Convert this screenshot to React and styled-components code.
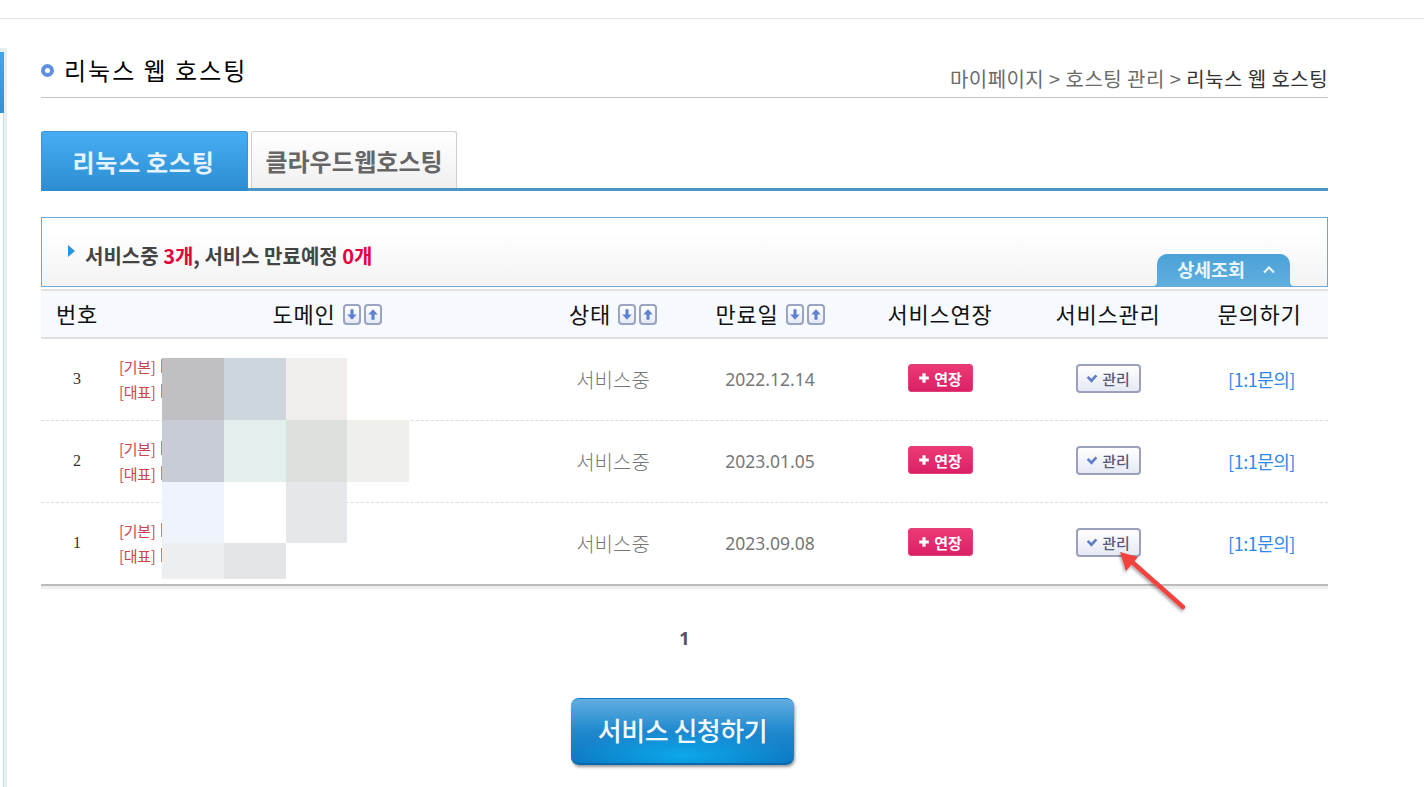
import React from 'react';
import styled, { createGlobalStyle } from 'styled-components';

const rows = [
    { no: 3, date: '2022.12.14' },
    { no: 2, date: '2023.01.05' },
    { no: 1, date: '2023.09.08' },
];

const mosaic = [
    '#c0bfc4', '#ced6dd', '#f2eeee', 'transparent',
    '#c8ccd4', '#e2efed', '#dce1dd', '#eff0eb',
    '#eff3fb', '#ffffff', '#e6e7ea', 'transparent',
    '#edeef0', '#e4e5e7', 'transparent', 'transparent',
];

const GlobalStyle = createGlobalStyle`
    html, body {
        margin: 0;
        padding: 0;
        background: #fff;
        overflow: hidden;
    }
    body {
        font-family: "Noto Sans CJK KR", "Liberation Sans", sans-serif;
    }
`;

const Page = styled.div`
    width: 1424px;
    height: 787px;
    overflow: hidden;
`;

const TopBar = styled.div`
    height: 18px;
    border-bottom: 1px solid #e4e4e4;
`;

const Body = styled.div`
    display: flex;
    padding-top: 29px;
`;

const SideEdge = styled.div`
    width: 7px;
    height: 740px;
    margin-right: 34px;
    background:
        linear-gradient(#3fa6ee, #3490d6) 0 4px / 4px 61px no-repeat,
        linear-gradient(#fff, #fff) 0 65px / 3px 100% no-repeat,
        linear-gradient(#c4def2, #c4def2) 3px 65px / 1px 100% no-repeat,
        #e9eef2;
`;

const Content = styled.div`
    position: relative;
    width: 1287px;
`;

const TitleRow = styled.div`
    height: 49px;
    display: flex;
    align-items: flex-end;
    justify-content: space-between;
    border-bottom: 1px solid #c4c4c4;
`;

const Title = styled.h1`
    display: flex;
    align-items: center;
    margin: 0 0 12px;
    font-size: 24px;
    line-height: 30px;
    font-weight: 400;
    color: #000;
    letter-spacing: 2px;
`;

const Bullet = styled.i`
    width: 5px;
    height: 5px;
    margin-right: 10px;
    border: 4px solid #6190e0;
    border-radius: 50%;
`;

const Crumbs = styled.div`
    margin-bottom: 5px;
    font-size: 20px;
    line-height: 26px;
    color: #6b6b6b;
    letter-spacing: 0.45px;
    b {
        font-weight: 400;
        color: #333;
    }
`;

const Tabs = styled.div`
    display: flex;
    align-items: flex-end;
    gap: 3px;
    height: 60px;
    margin-top: 33px;
    border-bottom: 3px solid #4a96c9;
    box-sizing: border-box;
`;

const Tab = styled.div`
    width: ${p => (p.$active ? '207px' : '206px')};
    height: ${p => (p.$active ? '60px' : '57px')};
    margin-bottom: ${p => (p.$active ? '-3px' : '0')};
    padding-right: ${p => (p.$active ? '2px' : '0')};
    display: flex;
    align-items: center;
    justify-content: center;
    box-sizing: border-box;
    border-radius: 3px 3px 0 0;
    border: 1px solid ${p => (p.$active ? '#3a94d6' : '#cfcfcf')};
    border-bottom: none;
    background: ${p => (p.$active
        ? 'linear-gradient(#46aef5, #2d8cd0)'
        : 'linear-gradient(#fff, #f0f0f0)')};
    color: ${p => (p.$active ? '#e4f3fd' : '#666')};
    font-size: 24px;
    font-weight: 700;
    letter-spacing: ${p => (p.$active ? '0.7px' : '0')};
    word-spacing: ${p => (p.$active ? '-1px' : '-5px')};
`;

const Summary = styled.div`
    position: relative;
    height: 70px;
    margin-top: 26px;
    box-sizing: border-box;
    display: flex;
    align-items: center;
    padding: 6px 0 0 26px;
    border: 1px solid #6aa8d8;
    background: linear-gradient(#fff 20%, #f3f3f4);
    font-size: 20px;
    font-weight: 700;
    color: #444;
    em {
        font-style: normal;
        color: #e6003c;
    }
    &::before {
        content: "";
        position: absolute;
        left: 26px;
        top: 27px;
        border-left: 7px solid #2b93d8;
        border-top: 6px solid transparent;
        border-bottom: 6px solid transparent;
    }
    span {
        margin-left: 17px;
    }
`;

const DetailTab = styled.div`
    position: absolute;
    right: 37px;
    bottom: 0;
    width: 133px;
    height: 32px;
    padding: 0 0 2px 6px;
    display: flex;
    align-items: center;
    justify-content: center;
    gap: 17px;
    box-sizing: border-box;
    border-radius: 10px 10px 0 0;
    background: linear-gradient(#4ba2d8, #60aedd);
    color: #e9f5fc;
    font-size: 18.5px;
    font-weight: 700;
    letter-spacing: -0.1px;
    &::before,
    &::after {
        content: "";
        position: absolute;
        bottom: 0;
        width: 4px;
        height: 4px;
    }
    &::before {
        left: -4px;
        background: radial-gradient(circle at 0 0, transparent 3.5px, #60aedd 4.5px);
    }
    &::after {
        right: -4px;
        background: radial-gradient(circle at 100% 0, transparent 3.5px, #60aedd 4.5px);
    }
`;

const columns = '72px 428px 144px 170px 170px 166px 137px';

const HeadRow = styled.div`
    display: grid;
    grid-template-columns: ${columns};
    height: 50px;
    margin-top: 2px;
    box-sizing: border-box;
    border-top: 2px solid #e2e2e2;
    border-bottom: 2px solid #e0e0e2;
    background: #f6f9fd;
`;

const HeadCell = styled.div`
    display: flex;
    align-items: center;
    justify-content: center;
    gap: 5px;
    padding-bottom: 2px;
    font-size: 22px;
    letter-spacing: 0.8px;
    color: #111;
`;

const SortGroup = styled.span`
    display: inline-flex;
    gap: 3px;
    margin-left: 2px;
    margin-top: 2px;
`;

const SortBtn = styled.span`
    width: 18px;
    height: 21px;
    display: flex;
    align-items: center;
    justify-content: center;
    box-sizing: border-box;
    border: 2px solid #9aa3c0;
    border-radius: 4px;
    background: linear-gradient(#fff, #e4e9f5);
`;

const Rows = styled.div`
    position: relative;
    border-bottom: 2px solid #bcbcbc;
    box-shadow: 0 3px 0 #eeeeee;
`;

const Row = styled.div`
    display: grid;
    grid-template-columns: ${columns};
    height: ${p => (p.$last ? '81px' : '82px')};
    box-sizing: border-box;
    border-bottom: ${p => (p.$last ? 'none' : '1px dashed #dcdcdc')};
`;

const Cell = styled.div`
    display: flex;
    align-items: center;
    justify-content: center;
    font-size: 20px;
    font-weight: 300;
    color: #777;
`;

const NoCell = styled(Cell)`
    padding-bottom: 1px;
    font-size: 16px;
    font-weight: 400;
    color: #333;
    font-family: "Liberation Serif", serif;
`;

const DateCell = styled(Cell)`
    padding-bottom: 1px;
    font-size: 17.5px;
    font-weight: 400;
    color: #777;
    font-family: "Noto Sans", sans-serif;
`;

const DomainCell = styled.div`
    display: flex;
    flex-direction: column;
    justify-content: center;
    gap: 5px;
    padding: 0 0 2px 6px;
`;

const DomainLine = styled.div`
    display: flex;
    align-items: center;
    gap: 5px;
    height: 20px;
    font-size: 15px;
    color: #c9474b;
    letter-spacing: -0.3px;
    &::after {
        content: "";
        width: 2px;
        height: 14px;
        background: #b98a6a;
    }
`;

const Mosaic = styled.div`
    position: absolute;
    left: 121px;
    top: 19px;
    display: grid;
    grid-template-columns: 62px 62px 61px 62px;
    grid-template-rows: 62px 62px 61px 36px;
`;

const Extend = styled.div`
    width: 65px;
    height: 28px;
    margin-bottom: 3px;
    display: flex;
    align-items: center;
    justify-content: center;
    gap: 4px;
    box-sizing: border-box;
    border-radius: 3px;
    border: 1px solid #e0407a;
    background: linear-gradient(#ec3a76, #dc2066);
    color: #fff;
    font-size: 15px;
    font-weight: 700;
`;

const Manage = styled.div`
    width: 65px;
    height: 29px;
    margin-bottom: 3px;
    display: flex;
    align-items: center;
    justify-content: center;
    gap: 4px;
    box-sizing: border-box;
    border-radius: 4px;
    border: 2px solid #9aa0bd;
    background: linear-gradient(#fff, #e6e9f3);
    color: #55597a;
    font-size: 15px;
    font-weight: 500;
`;

const Ask = styled.a`
    margin: 0 0 2px 4px;
    color: #2b88ee;
    font-size: 18px;
    font-weight: 400;
    letter-spacing: -0.5px;
`;

const Pager = styled.div`
    margin-top: 40px;
    height: 24px;
    line-height: 24px;
    text-align: center;
    font-size: 18px;
    font-weight: 700;
    color: #555;
    font-family: "Noto Sans", sans-serif;
`;

const ApplyRow = styled.div`
    display: flex;
    justify-content: center;
    margin-top: 48px;
    padding-right: 4px;
`;

const ApplyBtn = styled.button`
    width: 223px;
    height: 67px;
    padding: 0 0 4px;
    border: none;
    border-top: 1px solid #0d80d6;
    border-bottom: 2px solid #0a69ac;
    border-radius: 8px;
    background:
        radial-gradient(ellipse 50% 40% at 50% 88%, #0ca8ea 0, rgba(12, 168, 234, 0) 100%),
        linear-gradient(#62aee0 0, #1f88cf 50%, #0a78c4 100%);
    box-shadow: 1px 2px 3px rgba(0, 0, 0, 0.4);
    color: #f2f9fe;
    font-family: inherit;
    font-size: 26px;
    font-weight: 500;
    letter-spacing: -0.5px;
`;

const Arrow = styled.svg`
    position: absolute;
    left: 1060px;
    top: 504px;
    width: 100px;
    height: 65px;
    overflow: visible;
`;

function SortIcon({ up }) {
    return (
        <svg width="12" height="13" viewBox="0 0 10 11">
            <path
                d={up ? 'M5 1 L9 5.5 H6.3 V10 H3.7 V5.5 H1 Z' : 'M5 10 L9 5.5 H6.3 V1 H3.7 V5.5 H1 Z'}
                fill="#5d80d0"
            />
        </svg>
    );
}

function Sort() {
    return (
        <SortGroup>
            <SortBtn><SortIcon /></SortBtn>
            <SortBtn><SortIcon up /></SortBtn>
        </SortGroup>
    );
}

function App() {
    return (
        <Page>
            <GlobalStyle />
            <TopBar />
            <Body>
                <SideEdge />
                <Content>
                    <TitleRow>
                        <Title><Bullet />리눅스 웹 호스팅</Title>
                        <Crumbs>마이페이지 &gt; 호스팅 관리 &gt; <b>리눅스 웹 호스팅</b></Crumbs>
                    </TitleRow>

                    <Tabs>
                        <Tab $active>리눅스 호스팅</Tab>
                        <Tab>클라우드 웹호스팅</Tab>
                    </Tabs>

                    <Summary>
                        <span>서비스중 <em>3개</em>, 서비스 만료예정 <em>0개</em></span>
                        <DetailTab>
                            상세조회
                            <svg width="14" height="9" viewBox="0 0 14 9">
                                <path d="M2 7.5 L7 2.5 L12 7.5" fill="none" stroke="#e9f5fc" strokeWidth="2.2" />
                            </svg>
                        </DetailTab>
                    </Summary>

                    <HeadRow>
                        <HeadCell>번호</HeadCell>
                        <HeadCell>도메인 <Sort /></HeadCell>
                        <HeadCell>상태 <Sort /></HeadCell>
                        <HeadCell>만료일 <Sort /></HeadCell>
                        <HeadCell>서비스연장</HeadCell>
                        <HeadCell>서비스관리</HeadCell>
                        <HeadCell>문의하기</HeadCell>
                    </HeadRow>

                    <Rows>
                        {rows.map((row, i) => (
                            <Row key={row.no} $last={i === rows.length - 1}>
                                <NoCell>{row.no}</NoCell>
                                <DomainCell>
                                    <DomainLine>[기본]</DomainLine>
                                    <DomainLine>[대표]</DomainLine>
                                </DomainCell>
                                <Cell>서비스중</Cell>
                                <DateCell>{row.date}</DateCell>
                                <Cell>
                                    <Extend>
                                        <svg width="12" height="12" viewBox="0 0 10 10">
                                            <path d="M5 1 V9 M1 5 H9" stroke="#fff" strokeWidth="2.6" />
                                        </svg>
                                        연장
                                    </Extend>
                                </Cell>
                                <Cell>
                                    <Manage>
                                        <svg width="12" height="10" viewBox="0 0 11 9">
                                            <path d="M1.5 3.5 L5 7 L9.5 2" fill="none" stroke="#5f7ec8" strokeWidth="2.4" />
                                        </svg>
                                        관리
                                    </Manage>
                                </Cell>
                                <Cell><Ask>[1:1문의]</Ask></Cell>
                            </Row>
                        ))}
                        <Mosaic>
                            {mosaic.map((color, i) => (
                                <div key={i} style={{ background: color }} />
                            ))}
                        </Mosaic>
                    </Rows>

                    <Pager>1</Pager>
                    <ApplyRow>
                        <ApplyBtn>서비스 신청하기</ApplyBtn>
                    </ApplyRow>

                    <Arrow viewBox="0 0 100 65">
                        <defs>
                            <filter id="arrowShadow" x="-20%" y="-20%" width="150%" height="150%">
                                <feDropShadow dx="-1" dy="2" stdDeviation="1.5" floodColor="#000" floodOpacity="0.35" />
                            </filter>
                        </defs>
                        <g filter="url(#arrowShadow)">
                            <path d="M30 9 L82 55" stroke="#f2423e" strokeWidth="4.5" strokeLinecap="round" fill="none" />
                            <path d="M19 0 L37 5 L25 19 Z" fill="#f2423e" />
                        </g>
                    </Arrow>
                </Content>
            </Body>
        </Page>
    );
}

export default App;
